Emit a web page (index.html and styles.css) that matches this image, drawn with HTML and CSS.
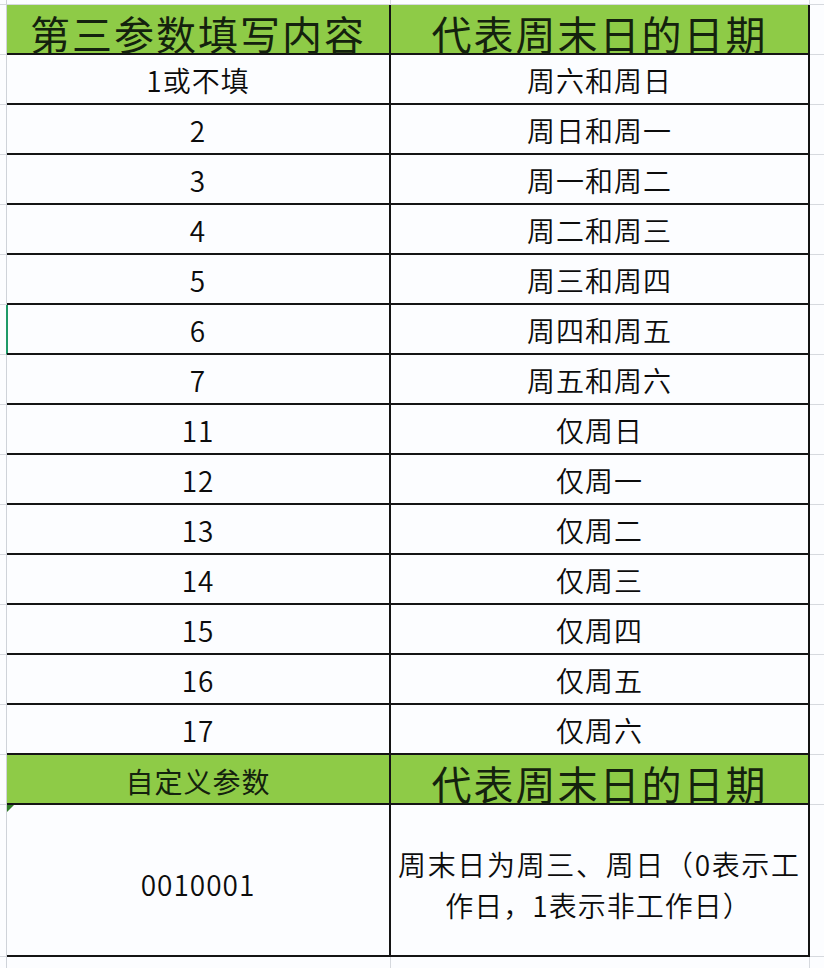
FILE: index.html
```html
<!DOCTYPE html>
<html lang="zh-CN">
<head>
<meta charset="utf-8">
<title>第三参数填写内容</title>
<link rel="stylesheet" href="styles.css">
</head>
<body>
<div class="sheet">
  <div class="g strip"></div><div class="s strip"></div><div class="s strip"></div><div class="r strip"></div>

  <div class="g"></div><div class="c head"><span class="htxt">第三参数填写内容</span></div><div class="c head"><span class="htxt">代表周末日的日期</span></div><div class="r"></div>

  <div class="g"></div><div class="c">1或不填</div><div class="c">周六和周日</div><div class="r"></div>
  <div class="g"></div><div class="c">2</div><div class="c">周日和周一</div><div class="r"></div>
  <div class="g"></div><div class="c">3</div><div class="c">周一和周二</div><div class="r"></div>
  <div class="g"></div><div class="c">4</div><div class="c">周二和周三</div><div class="r"></div>
  <div class="g"></div><div class="c">5</div><div class="c">周三和周四</div><div class="r"></div>
  <div class="g sel"></div><div class="c selc">6</div><div class="c">周四和周五</div><div class="r"></div>
  <div class="g"></div><div class="c">7</div><div class="c">周五和周六</div><div class="r"></div>
  <div class="g"></div><div class="c">11</div><div class="c">仅周日</div><div class="r"></div>
  <div class="g"></div><div class="c">12</div><div class="c">仅周一</div><div class="r"></div>
  <div class="g"></div><div class="c">13</div><div class="c">仅周二</div><div class="r"></div>
  <div class="g"></div><div class="c">14</div><div class="c">仅周三</div><div class="r"></div>
  <div class="g"></div><div class="c">15</div><div class="c">仅周四</div><div class="r"></div>
  <div class="g"></div><div class="c">16</div><div class="c">仅周五</div><div class="r"></div>
  <div class="g"></div><div class="c">17</div><div class="c">仅周六</div><div class="r"></div>

  <div class="g"></div><div class="c head2">自定义参数</div><div class="c head"><span class="htxt">代表周末日的日期</span></div><div class="r"></div>

  <div class="g big"></div><div class="c big mark">0010001</div><div class="c big desc"><span class="l1">周末日为周三、周日（0表示工</span><span class="l2">作日，1表示非工作日）</span></div><div class="r big"></div>

  <div class="g strip2"></div><div class="s strip2"></div><div class="s strip2"></div><div class="r strip2"></div>
</div>
</body>
</html>
```
FILE: styles.css
```css
html, body {
  margin: 0;
  padding: 0;
  background: #fcfdff;
}
body {
  width: 824px;
  height: 968px;
  overflow: hidden;
  font-family: "Noto Sans CJK SC", sans-serif;
  color: #0c0c0c;
}
.sheet {
  display: grid;
  grid-template-columns: 7px 384px 419px 14px;
  grid-template-rows: 5px repeat(16, 50px) 152px 11px;
}
.sheet > div {
  box-sizing: border-box;
}
.strip { border-bottom: 1px solid #d6d9de; }
.s { border-right: 1px solid #d6d9de; }
.g {
  border-right: 1px solid #cfd3d9;
  border-bottom: 1px solid #d6d9de;
}
.r {
  border-bottom: 1px solid #d6d9de;
}
.g.strip2, .r.strip2, .s.strip2 { border-bottom: none; }
.c {
  border-right: 2px solid #141414;
  border-bottom: 2px solid #141414;
  display: flex;
  align-items: center;
  justify-content: center;
  font-size: 28px;
  font-weight: 350;
  letter-spacing: 1px;
  padding-top: 2px;
}
.head {
  background: #8ecb47;
  font-size: 40px;
  font-weight: 400;
  letter-spacing: 2px;
  color: #14220e;
  padding-top: 8px;
}
.head2 {
  background: #8ecb47;
  font-size: 28px;
  font-weight: 400;
  letter-spacing: 1px;
  color: #14220e;
  padding-top: 3px;
}
.sel { border-right: 1px solid #1f9a68; }
.selc { box-shadow: inset 1px 0 0 #1f9a68; }
.mark { position: relative; padding-top: 8px; }
.mark::before {
  content: "";
  position: absolute;
  left: 0;
  top: 0;
  border-top: 7px solid #2f7a26;
  border-right: 7px solid transparent;
}
.desc {
  flex-direction: column;
  align-items: stretch;
  padding: 10px 9px 0 7px;
  font-size: 28px;
  line-height: 41px;
  letter-spacing: 0;
}
.l1 {
  display: block;
  text-align: justify;
  text-align-last: justify;
}
.l2 {
  display: block;
  text-align: center;
  letter-spacing: 1px;
}
```
